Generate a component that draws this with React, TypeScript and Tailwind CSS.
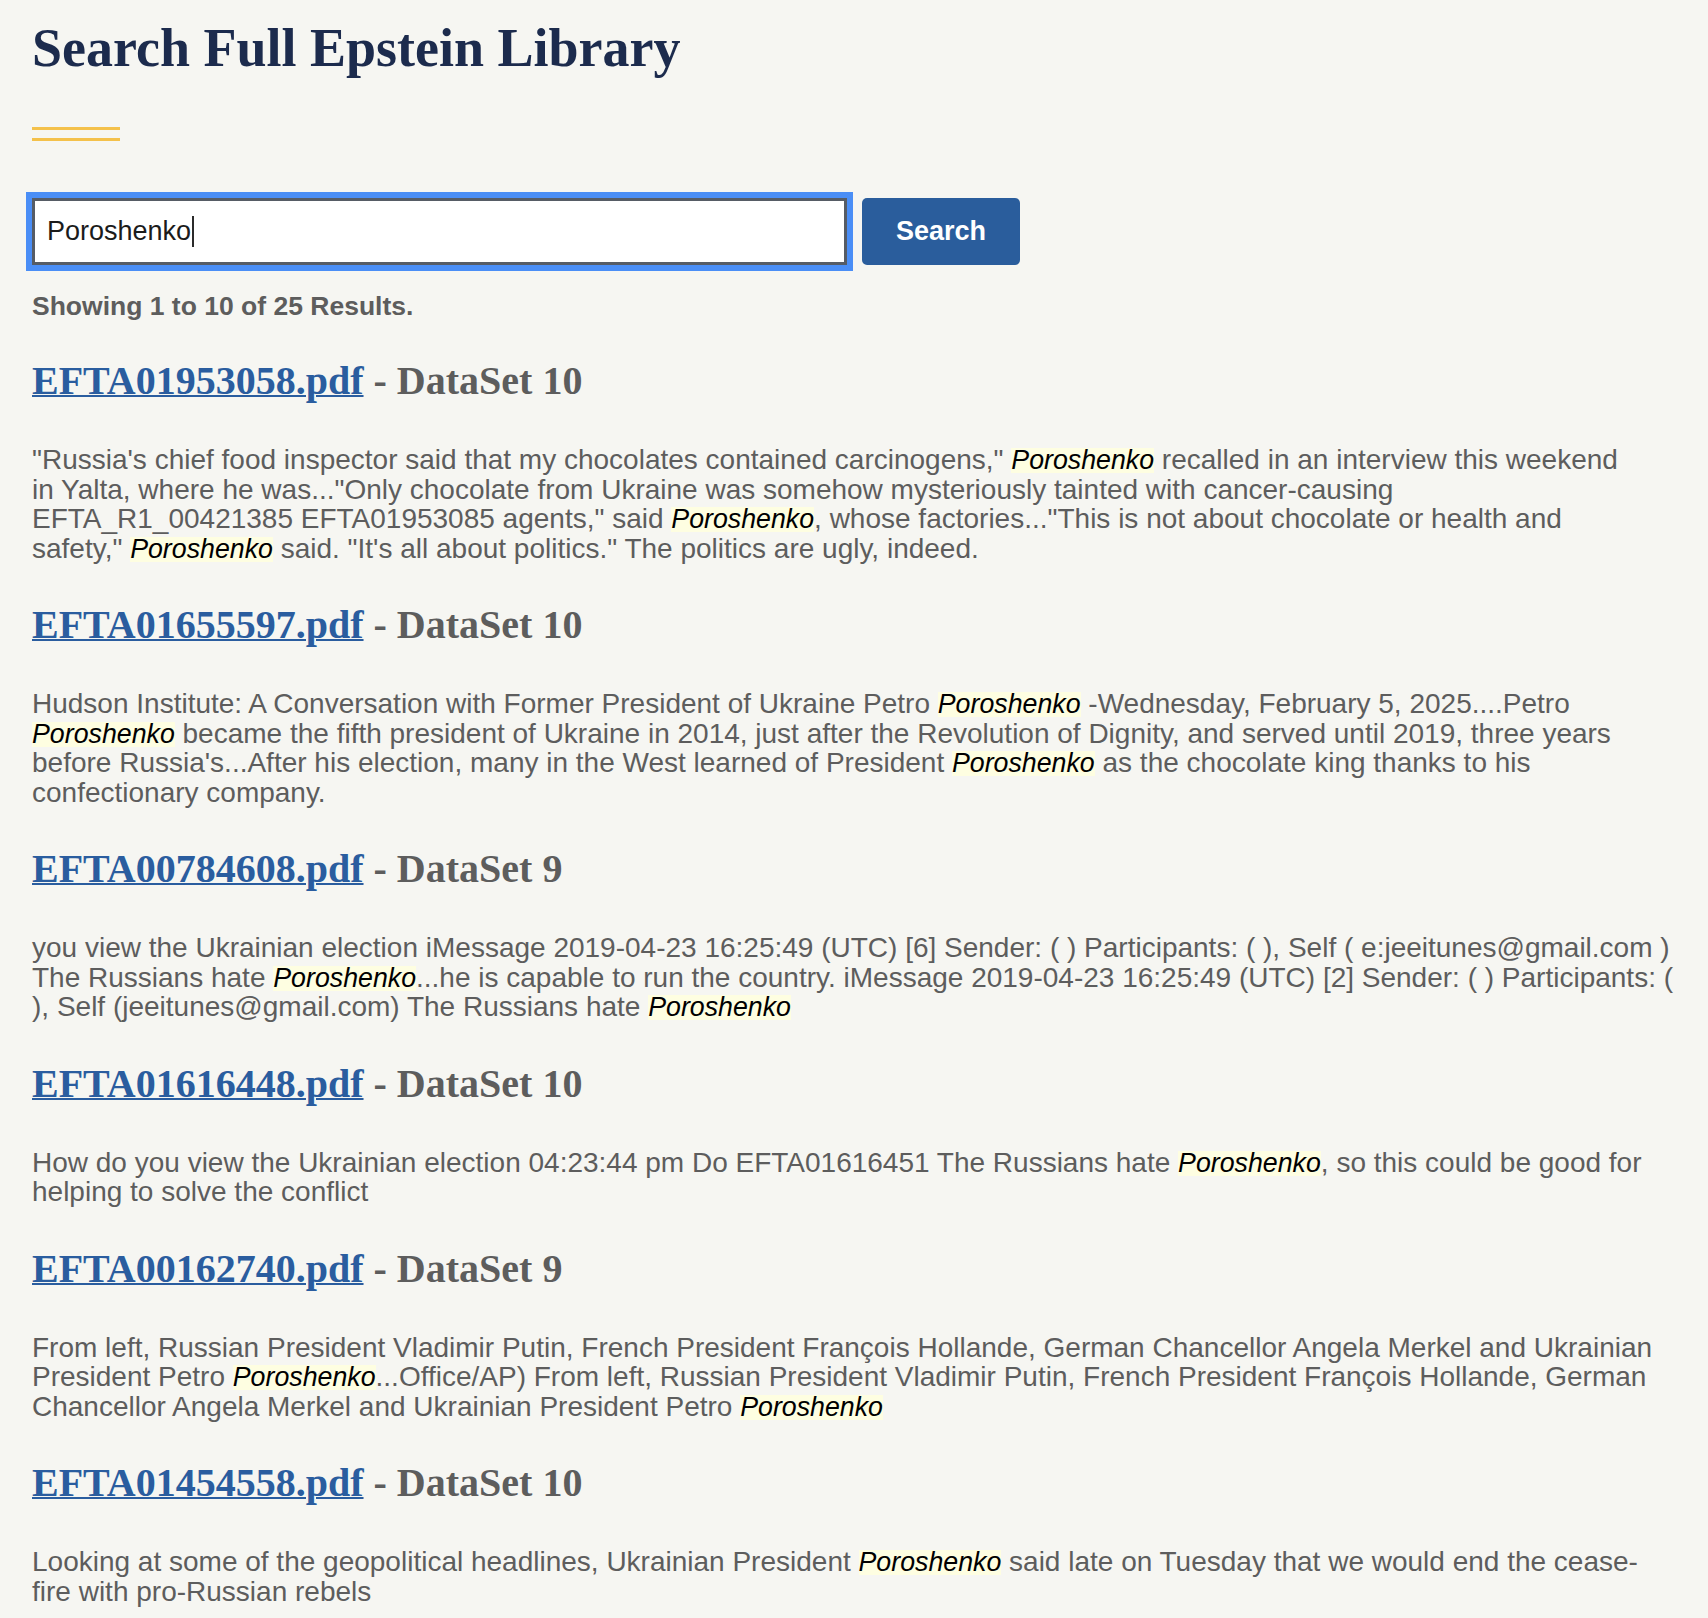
import React from 'react'

type Part = string | { hit: string }

type Result = {
  file: string
  dataset: number
  // each inner array is one line of the snippet as it wraps in the page
  lines: Part[][]
}

const HIT = { hit: 'Poroshenko' }

const results: Result[] = [
  {
    file: 'EFTA01953058.pdf',
    dataset: 10,
    lines: [
      [
        '"Russia\'s chief food inspector said that my chocolates contained carcinogens," ',
        HIT,
        ' recalled in an interview this weekend',
      ],
      ['in Yalta, where he was..."Only chocolate from Ukraine was somehow mysteriously tainted with cancer-causing'],
      [
        'EFTA_R1_00421385 EFTA01953085 agents," said ',
        HIT,
        ', whose factories..."This is not about chocolate or health and',
      ],
      ['safety," ', HIT, ' said. "It\'s all about politics." The politics are ugly, indeed.'],
    ],
  },
  {
    file: 'EFTA01655597.pdf',
    dataset: 10,
    lines: [
      [
        'Hudson Institute: A Conversation with Former President of Ukraine Petro ',
        HIT,
        ' -Wednesday, February 5, 2025....Petro',
      ],
      [
        HIT,
        ' became the fifth president of Ukraine in 2014, just after the Revolution of Dignity, and served until 2019, three years',
      ],
      [
        "before Russia's...After his election, many in the West learned of President ",
        HIT,
        ' as the chocolate king thanks to his',
      ],
      ['confectionary company.'],
    ],
  },
  {
    file: 'EFTA00784608.pdf',
    dataset: 9,
    lines: [
      [
        'you view the Ukrainian election iMessage 2019-04-23 16:25:49 (UTC) [6] Sender: ( ) Participants: ( ), Self ( e:jeeitunes@gmail.com )',
      ],
      [
        'The Russians hate ',
        HIT,
        '...he is capable to run the country. iMessage 2019-04-23 16:25:49 (UTC) [2] Sender: ( ) Participants: (',
      ],
      ['), Self (jeeitunes@gmail.com) The Russians hate ', HIT],
    ],
  },
  {
    file: 'EFTA01616448.pdf',
    dataset: 10,
    lines: [
      [
        'How do you view the Ukrainian election 04:23:44 pm Do EFTA01616451 The Russians hate ',
        HIT,
        ', so this could be good for',
      ],
      ['helping to solve the conflict'],
    ],
  },
  {
    file: 'EFTA00162740.pdf',
    dataset: 9,
    lines: [
      [
        'From left, Russian President Vladimir Putin, French President François Hollande, German Chancellor Angela Merkel and Ukrainian',
      ],
      [
        'President Petro ',
        HIT,
        '...Office/AP) From left, Russian President Vladimir Putin, French President François Hollande, German',
      ],
      ['Chancellor Angela Merkel and Ukrainian President Petro ', HIT],
    ],
  },
  {
    file: 'EFTA01454558.pdf',
    dataset: 10,
    lines: [
      [
        'Looking at some of the geopolitical headlines, Ukrainian President ',
        HIT,
        ' said late on Tuesday that we would end the cease-',
      ],
      ['fire with pro-Russian rebels'],
    ],
  },
]

const serif = "font-['Liberation_Serif',_'Times_New_Roman',_serif]"

export default function App() {
  return (
    <div className="min-h-screen bg-[#f6f6f2] pl-8 pr-4 pt-[16px] pb-10 font-['Liberation_Sans',_Arial,_sans-serif]">
      <h1 className={`${serif} text-[54px] leading-[64px] font-bold text-[#1c2b4d]`}>
        Search Full Epstein Library
      </h1>

      <div className="mt-[47px] flex flex-col gap-[8px]">
        <div className="h-[3px] w-[88px] bg-[#f4c14b]" />
        <div className="h-[3px] w-[88px] bg-[#f4c14b]" />
      </div>

      <form className="mt-[57px] flex" onSubmit={(e) => e.preventDefault()}>
        <div
          role="textbox"
          className="flex h-[67px] w-[815px] items-center border-[3px] border-[#565c65] bg-white pl-[12px] text-[27px] text-[#1b1b1b] outline-[6px] outline-solid outline-[#4a8ef6]"
        >
          <span>Poroshenko</span>
          <span className="ml-[1px] inline-block h-[31px] w-[2px] bg-[#2b2b2b]" />
        </div>
        <button
          type="submit"
          className="ml-[15px] h-[67px] w-[158px] rounded-[5px] bg-[#2a5d9c] text-[27px] font-bold text-white"
        >
          Search
        </button>
      </form>

      <p className="mt-[26px] text-[26.5px] leading-[30px] font-bold text-[#5d5d5d]">
        Showing 1 to 10 of 25 Results.
      </p>

      <div className="mt-[36px]">
        {results.map((r, i) => (
          <ResultItem key={r.file} result={r} first={i === 0} />
        ))}
      </div>
    </div>
  )
}

function ResultItem({ result, first }: { result: Result; first: boolean }) {
  return (
    <div className={first ? '' : 'mt-[38px]'}>
      <h2 className={`${serif} text-[40px] leading-[48px] font-bold text-[#5d5d5d]`}>
        <a href="#" className="text-[#2a5d9f] underline decoration-2">
          {result.file}
        </a>{' '}
        - DataSet {result.dataset}
      </h2>
      <p className="mt-[40px] text-[28px] leading-[29.5px] whitespace-nowrap text-[#5d5d5d]">
        {result.lines.map((line, li) => (
          <React.Fragment key={li}>
            {li > 0 && <br />}
            {line.map((part, i) =>
              typeof part === 'string' ? (
                <React.Fragment key={i}>{part}</React.Fragment>
              ) : (
                <mark
                  key={i}
                  className="inline-block bg-[#fefee1] text-[26.75px] leading-[25px] text-black italic"
                >
                  {part.hit}
                </mark>
              ),
            )}
          </React.Fragment>
        ))}
      </p>
    </div>
  )
}
